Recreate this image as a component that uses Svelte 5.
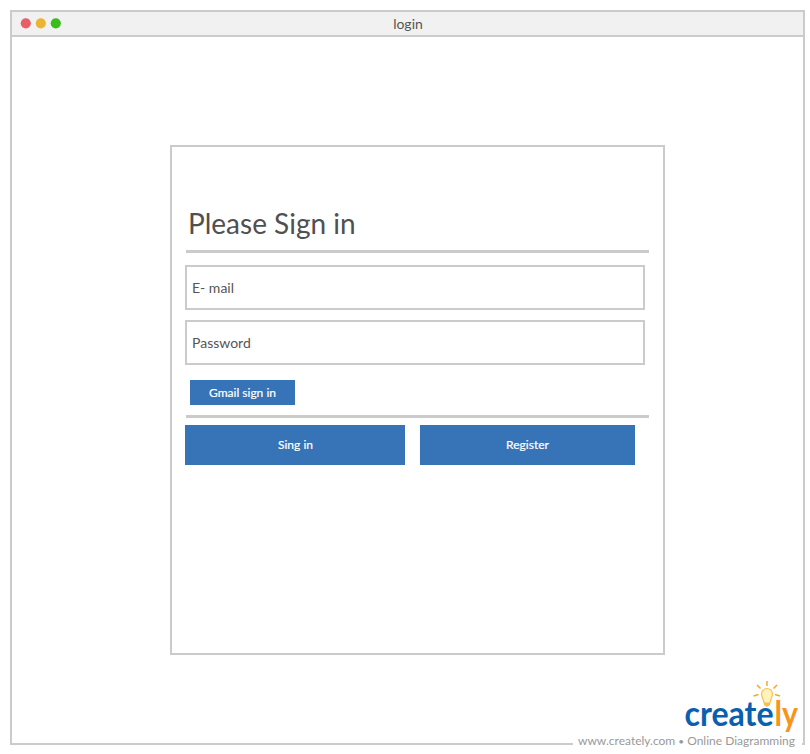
<script>
  const lights = ['#e95f68', '#edb432', '#38bd1a'];
  const fields = ['E- mail', 'Password'];
</script>

<div class="page">
  <main class="window">
    <header>
      <div class="lights">
        {#each lights as color}
          <svg width="11" height="11" viewBox="0 0 11 11"><circle cx="5.8" cy="5.3" r="5.1" fill={color} /></svg>
        {/each}
      </div>
      <span class="title">login</span>
    </header>
    <section class="card">
      <h1>Please Sign in</h1>
      <div class="rule"></div>
      {#each fields as field}
        <div class="field">{field}</div>
      {/each}
      <button class="gmail">Gmail sign in</button>
      <div class="rule"></div>
      <div class="actions">
        <button class="sign">Sing in</button>
        <button class="register">Register</button>
      </div>
    </section>
  </main>
  <svg class="brand" width="229" height="74" viewBox="573 680 229 74">
    <rect x="573" y="736" width="229" height="18" fill="#fff" />
    <g stroke="#f7a823" stroke-width="1.5" fill="none">
      <path d="M767 681v5M757 685l3.5 3.5M777 685l-3.5 3.5M753.500 696l5-1.500M780 696l-5-1.500" />
    </g>
    <path d="M764 703c0-4-2.500-5-2.500-9a5.500 5.500 0 0 1 11 0c0 4-2.500 5-2.500 9z" fill="#fff3bd" stroke="#f9c04c" stroke-width="1.200" />
    <path d="M764 703h6v2l-3 2-3-2z" fill="#f9bd49" />
    <text y="726" font-family="Lato, sans-serif" font-weight="700" font-size="35">
      <tspan x="684.500" fill="#0860ae" textLength="89" lengthAdjust="spacingAndGlyphs">create</tspan><tspan x="774.500" fill="#f7941d" textLength="23.500" lengthAdjust="spacingAndGlyphs">ly</tspan>
    </text>
    <text x="578" y="745" font-family="Lato, sans-serif" font-size="12" fill="#999" textLength="217">www.creately.com <tspan font-size="10">•</tspan> Online Diagramming</text>
  </svg>
</div>

<style>
  :global(body) { background: #fff; }
  .page { position: relative; box-sizing: border-box; width: 810px; height: 754px; padding: 10px 5px 9px 10px; font-family: Lato, sans-serif; color: #555; }
  .window { box-sizing: border-box; height: 735px; border: 2px solid #cbcbcb; }
  header { display: flex; align-items: center; height: 23px; background: #f1f1f1; border-bottom: 2px solid #cbcbcb; }
  .lights { display: flex; gap: 4px; width: 106px; padding-left: 8px; }
  .title { flex: 1; padding-right: 113px; text-align: center; font-size: 14px; line-height: 23px; }
  .card { box-sizing: border-box; width: 495px; height: 510px; margin: 108px 0 0 158px; padding: 58px 13px 0; border: 2px solid #cbcbcb; }
  h1 { margin: 0 0 9px 3px; font-size: 28px; line-height: 36px; font-weight: 400; color: #505050; }
  .rule { width: 463px; height: 3px; margin-left: 1px; background: #cbcbcb; }
  .field { box-sizing: border-box; width: 460px; height: 45px; margin-top: 10px; padding-left: 5px; border: 2px solid #cbcbcb; font-size: 14px; line-height: 41px; }
  .rule + .field { margin-top: 12px; }
  button { display: block; padding: 0; border: 0; background: #3673b7; color: #fff; font: 12px Lato, sans-serif; -webkit-text-stroke: 0.2px #fff; }
  .gmail { width: 105px; height: 25px; margin: 15px 0 10px 5px; }
  .actions { display: flex; gap: 15px; margin-top: 7px; }
  .actions button { height: 40px; padding-bottom: 2px; }
  .sign { width: 220px; padding-left: 1px; }
  .register { width: 215px; }
  .brand { position: absolute; left: 573px; top: 680px; }
</style>
